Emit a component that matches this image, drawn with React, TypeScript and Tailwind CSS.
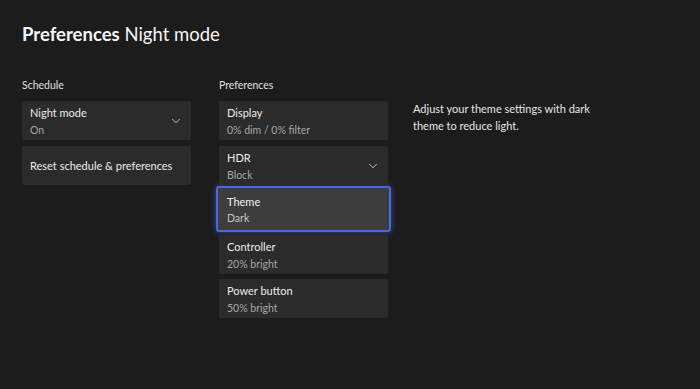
import { ChevronDown } from "lucide-react"

type Item = {
  title: string
  value?: string
  dropdown?: boolean
  focused?: boolean
  cls?: string
}

const schedule: Item[] = [
  { title: "Night mode", value: "On", dropdown: true },
  { title: "Reset schedule & preferences", cls: "mt-[6px]" },
]

const prefs: Item[] = [
  { title: "Display", value: "0% dim / 0% filter" },
  { title: "HDR", value: "Block", dropdown: true, cls: "mt-[6px]" },
  { title: "Theme", value: "Dark", focused: true, cls: "mt-[1px]" },
  { title: "Controller", value: "20% bright", cls: "mt-[3px]" },
  { title: "Power button", value: "50% bright", cls: "mt-[5px]" },
]

function Card({ item }: { item: Item }) {
  if (item.focused) {
    return (
      <div
        className={`-mx-[3px] flex h-[46px] flex-col justify-center rounded-[3px] border-2 border-[#4868e0] bg-[#3d3d3d] pl-[9px] shadow-[0_0_6px_rgba(72,104,224,0.6)] ${item.cls ?? ""}`}
      >
        <span className="text-[11px] leading-[15px] text-[#f2f2f2]">{item.title}</span>
        <span className="mt-[2px] text-[10.5px] leading-[14px] text-[#c4c4c4]">{item.value}</span>
      </div>
    )
  }
  return (
    <div
      className={`relative flex h-[39px] flex-col justify-center rounded-[2px] bg-[#2b2b2b] pl-[8px] ${item.cls ?? ""}`}
    >
      <span className="text-[11px] leading-[15px] text-[#ededed]">{item.title}</span>
      {item.value && (
        <span className="mt-[3px] text-[10.5px] leading-[14px] text-[#a6a6a6]">{item.value}</span>
      )}
      {item.dropdown && (
        <ChevronDown
          className="absolute right-[8px] top-[13px] h-[14px] w-[14px] text-[#d8d8d8]"
          strokeWidth={1.5}
        />
      )}
    </div>
  )
}

export default function App() {
  return (
    <div
      className="h-[389px] w-[700px] overflow-hidden bg-[#1c1c1c] pl-[22px] pt-[22px] text-white"
      style={{ fontFamily: 'Lato, "Open Sans", sans-serif' }}
    >
      <h1 className="text-[18.5px] leading-[24px] text-[#f5f5f5]">
        <span className="font-bold">Preferences</span> <span>Night mode</span>
      </h1>

      <div className="mt-[32px] flex">
        <div className="w-[169px]">
          <div className="text-[10.5px] leading-[14px] text-[#e0e0e0]">Schedule</div>
          <div className="mt-[9px] flex flex-col">
            {schedule.map((it) => (
              <Card key={it.title} item={it} />
            ))}
          </div>
        </div>

        <div className="ml-[28px] w-[169px]">
          <div className="text-[10.5px] leading-[14px] text-[#e0e0e0]">Preferences</div>
          <div className="mt-[9px] flex flex-col">
            {prefs.map((it) => (
              <Card key={it.title} item={it} />
            ))}
          </div>
        </div>

        <div className="ml-[25px] w-[178px] pt-[22px] text-[11px] leading-[17px] text-[#e6e6e6]">
          Adjust your theme settings with dark theme to reduce light.
        </div>
      </div>
    </div>
  )
}
